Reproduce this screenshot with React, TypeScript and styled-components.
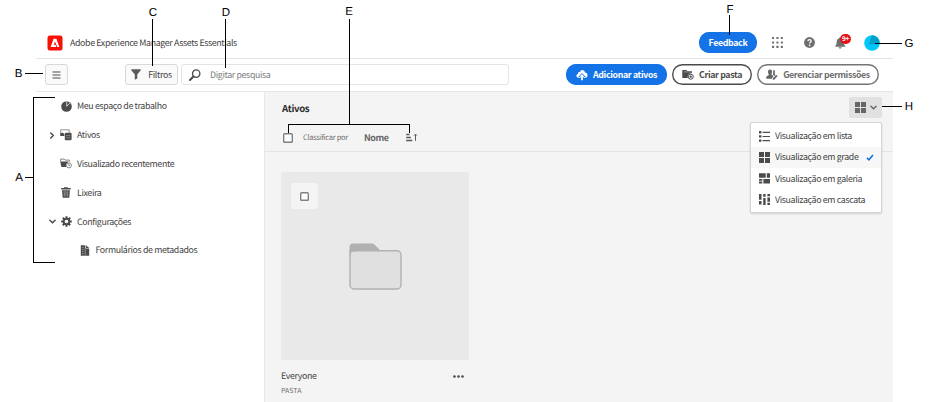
import React from "react";
import styled, { createGlobalStyle } from "styled-components";

const Global = createGlobalStyle`
  *, *::before, *::after { box-sizing: border-box; }
  body {
    margin: 0;
    background: #fff;
    color: #424242;
    font: 8.8px/14px "Noto Sans CJK SC", "Noto Sans", sans-serif;
    letter-spacing: -0.35px;
    text-rendering: geometricPrecision;
    overflow: hidden;
  }
  button { font: inherit; letter-spacing: inherit; color: inherit; padding: 0; background: none; border: 0; }
  svg { display: block; flex: none; }
`;

const Page = styled.div`
  position: relative;
  width: 938px;
  height: 402px;
  padding-left: 36px;
  overflow: hidden;
`;

const Shell = styled.div`
  width: 857px;
  height: 402px;
  display: flex;
  flex-direction: column;
`;

const Header = styled.header`
  height: 59px;
  flex: none;
  display: flex;
  align-items: center;
  padding: 27px 13px 0 11px;
  border-bottom: 1px solid #e4e4e4;
`;

const Title = styled.div`
  margin-left: 7px;
  flex: 1;
  white-space: nowrap;
`;

const HeaderActions = styled.div`
  display: flex;
  align-items: center;
`;

const Pill = styled.button<{ $w: number; $tone: "blue" | "dark" | "gray" }>`
  width: ${(p) => p.$w}px;
  height: 21px;
  display: flex;
  align-items: center;
  justify-content: center;
  gap: 5px;
  border-radius: 11px;
  font-weight: 700;
  white-space: nowrap;
  box-shadow: inset 0 0 0 1.4px
    ${(p) => (p.$tone === "blue" ? "#1473e6" : p.$tone === "dark" ? "#4b4b4b" : "#747474")};
  background: ${(p) => (p.$tone === "blue" ? "#1473e6" : "#fff")};
  color: ${(p) => (p.$tone === "blue" ? "#fff" : p.$tone === "dark" ? "#4b4b4b" : "#6e6e6e")};
`;

const IconSlot = styled.div<{ $ml: number }>`
  position: relative;
  margin-left: ${(p) => p.$ml}px;
`;

const Badge = styled.span`
  position: absolute;
  left: 5px;
  top: -3px;
  width: 11px;
  height: 10px;
  border-radius: 5px;
  background: #e6121a;
  color: #fff;
  font-size: 6.5px;
  line-height: 9px;
  font-weight: 700;
  text-align: center;
`;

const Toolbar = styled.div`
  height: 33px;
  flex: none;
  display: flex;
  align-items: center;
  padding: 0 14px 1px 9px;
  border-bottom: 1px solid #e6e6e6;
`;

const BoxButton = styled.button<{ $w: number }>`
  width: ${(p) => p.$w}px;
  height: 21px;
  display: flex;
  align-items: center;
  justify-content: center;
  gap: 7px;
  background: #fafafa;
  border: 1px solid #d8d8d8;
  border-radius: 3px;
`;

const SearchField = styled.div`
  width: 328px;
  height: 21px;
  margin-left: 3px;
  display: flex;
  align-items: center;
  gap: 9px;
  padding-left: 7px;
  color: #7c7c7c;
  border: 1px solid #e4e4e4;
  border-radius: 3px;
`;

const PillGroup = styled.div`
  margin-left: auto;
  display: flex;
  gap: 5px;
`;

const Body = styled.div`
  flex: 1;
  min-height: 0;
  display: flex;
`;

const Sidebar = styled.nav`
  width: 228px;
`;

const NavRow = styled.div<{ $nested?: boolean }>`
  height: 28.8px;
  display: flex;
  align-items: center;
  padding-left: ${(p) => (p.$nested ? 31.5 : 13)}px;
  white-space: nowrap;
`;

const Toggle = styled.span`
  width: 11px;
  display: flex;
`;

const NavIcon = styled.span`
  width: 12px;
  margin-right: 5px;
  display: flex;
  justify-content: center;
`;

const Content = styled.main`
  flex: 1;
  background: #f4f4f4;
  border-left: 1px solid #e8e8e8;
`;

const ContentTop = styled.div`
  height: 60px;
  border-bottom: 1px solid #e4e4e4;
`;

const TitleRow = styled.div`
  height: 31px;
  display: flex;
  align-items: center;
  justify-content: space-between;
  padding: 0 11px 0 17px;
`;

const Heading = styled.h1`
  margin: 0;
  font-size: 9.6px;
  font-weight: 700;
  color: #2c2c2c;
  letter-spacing: -0.3px;
`;

const ViewSwitch = styled.button`
  width: 33px;
  height: 21px;
  display: flex;
  align-items: center;
  justify-content: center;
  gap: 4px;
  border-radius: 2px;
  background: #e1e1e1;
`;

const SortRow = styled.div`
  height: 29px;
  display: flex;
  align-items: center;
  padding-left: 18px;
`;

const Check = styled.span<{ $size: number }>`
  width: ${(p) => p.$size}px;
  height: ${(p) => p.$size}px;
  box-shadow: inset 0 0 0 1.4px #808080;
  border-radius: 1.5px;
  background: #fff;
`;

const SortLabel = styled.span`
  margin-left: 10px;
  width: 61px;
  font-size: 7.5px;
  letter-spacing: -0.3px;
  color: #707070;
  white-space: nowrap;
`;

const SortValue = styled.span`
  width: 42px;
  font-size: 9px;
  letter-spacing: -0.4px;
  font-weight: 700;
  color: #666;
`;

const Card = styled.article`
  width: 188px;
  margin: 20px 0 0 16px;
`;

const Thumb = styled.div`
  position: relative;
  height: 188px;
  display: flex;
  align-items: center;
  justify-content: center;
  border-radius: 3px;
  background: #e9e9e9;
`;

const SelectChip = styled.div`
  position: absolute;
  left: 10px;
  top: 11px;
  width: 27px;
  height: 26px;
  display: flex;
  align-items: center;
  justify-content: center;
  border-radius: 3px;
  background: #f4f4f4;
`;

const CardTitle = styled.div`
  margin-top: 9px;
  height: 14px;
  display: flex;
  align-items: center;
  justify-content: space-between;
  padding-right: 5px;
`;

const CardType = styled.div`
  margin-top: 0.5px;
  font-size: 7px;
  letter-spacing: 0;
  color: #6e6e6e;
`;

const Menu = styled.div`
  position: absolute;
  left: 750px;
  top: 122px;
  width: 132px;
  height: 91px;
  padding: 2.5px 0;
  border: 1px solid #d6d6d6;
  border-radius: 2px;
  background: #fff;
  box-shadow: 0 1px 2px rgba(0, 0, 0, 0.15);
`;

const MenuRow = styled.div<{ $active?: boolean }>`
  height: 21.25px;
  display: flex;
  align-items: center;
  padding: 0 7px 0 8px;
  gap: 5px;
  white-space: nowrap;
  background: ${(p) => (p.$active ? "#f7f7f7" : "#fff")};
`;

const MenuLabel = styled.span`
  flex: 1;
`;

const Annotations = styled.div`
  position: absolute;
  inset: 0;
  pointer-events: none;
`;

const Leader = styled.svg`
  position: absolute;
  inset: 0;
`;

const Marker = styled.span<{ $x: number; $y: number }>`
  position: absolute;
  left: ${(p) => p.$x - 8}px;
  top: ${(p) => p.$y - 7}px;
  width: 16px;
  text-align: center;
  font: 11.5px/14px "Liberation Sans", sans-serif;
  letter-spacing: 0;
  color: #000;
`;

const ink = "#4b4b4b";

const Logo = () => (
  <svg width="16" height="16" viewBox="0 0 16 16">
    <rect x=".5" y=".5" width="15" height="15" rx="2.5" fill="#fa0f00" />
    <path d="M6.6 3.7h2.8l3 8.2h-2.2L8 6.5l-1.2 3.3h1.7l.8 2.1H3.6z" fill="#fff" />
  </svg>
);

const Apps = () => (
  <svg width="11" height="11" viewBox="0 0 11 11" fill="#6e6e6e">
    {[0, 4.4, 8.8].map((y) => [0, 4.4, 8.8].map((x) => (
      <rect key={`${x}-${y}`} x={x} y={y} width="2.1" height="2.1" rx=".5" />
    )))}
  </svg>
);

const Help = () => (
  <svg width="11" height="11" viewBox="0 0 11 11">
    <circle cx="5.5" cy="5.5" r="5.4" fill="#6e6e6e" />
    <path d="M3.9 4.1c.1-2 3.3-1.9 3.3-.1 0 1.2-1.6 1.2-1.6 2.5" fill="none" stroke="#fff" strokeWidth="1.3" />
    <circle cx="5.6" cy="8.3" r=".85" fill="#fff" />
  </svg>
);

const Bell = () => (
  <svg width="11" height="12" viewBox="0 0 11 12" fill="#6e6e6e">
    <path d="M5 .6c.8 0 1.1.5 1.2 1 2 .5 2.5 2.1 2.5 4.1 0 1.7.7 2.4 1.6 3.1v.9H.3v-.9c.9-.7 1.2-1.4 1.3-3.1 0-2 .5-3.5 2.3-4.1 0-.5.4-1 1.1-1zM3.6 10.3h3c0 1.7-3 1.7-3 0z" />
  </svg>
);

const Avatar = () => (
  <svg width="16" height="16" viewBox="0 0 16 16">
    <circle cx="8" cy="8" r="7.8" fill="#00c8fa" />
    <path d="M7.8.2A7.8 7.8 0 0 1 15.6 9L4.9 9.4z" fill="#009fc7" />
  </svg>
);

const Hamburger = () => (
  <svg width="9" height="8" viewBox="0 0 9 8" stroke={ink} strokeWidth="1.2">
    <path d="M.5 1h8M.5 4h8M.5 7h8" />
  </svg>
);

const Funnel = () => (
  <svg width="10" height="11" viewBox="0 0 10 11" fill="#5c5c5c">
    <path d="M.3.3h9.4v1L6.3 5.6v3.8L3.8 10.8V5.6L.3 1.3z" />
  </svg>
);

const Search = () => (
  <svg width="12" height="12" viewBox="0 0 12 12" fill="none" stroke={ink}>
    <circle cx="7.2" cy="4.6" r="3.7" strokeWidth="1.3" />
    <path d="M4.4 7.5 1 11" strokeWidth="1.9" strokeLinecap="round" />
  </svg>
);

const CloudUp = () => (
  <svg width="12" height="12" viewBox="0 0 12 12">
    <path d="M2.5 8.8C-.3 8.8-.2 5.2 2 4.9 1.7 3.3 3.3 2.7 4 3.1 4.5-.1 9 .4 8.9 3.6c3.3-.1 3.6 5.1.4 5.2z" fill="#fff" />
    <path d="M6 4 9.8 8H7.5v3.4h-3V8H2.2z" fill="#1473e6" />
    <path d="M6 5 8.6 7.7H6.9v3.5H5.1V7.7H3.4z" fill="#fff" />
  </svg>
);

const FolderAdd = () => (
  <svg width="12" height="11" viewBox="0 0 12 11" fill="none">
    <path d="M.3 1h4l1 1h4.5v2.2A3.8 3.8 0 0 0 5.8 9H.3z" fill={ink} />
    <path d="M1.8 2.9h7.5" stroke="#bbb" strokeWidth=".7" />
    <circle cx="8.8" cy="7.7" r="2.5" stroke={ink} strokeWidth="1" fill="#fff" />
    <path d="M8.8 6.3v2.8M7.4 7.7h2.8" stroke={ink} strokeWidth=".9" />
  </svg>
);

const UserEdit = () => (
  <svg width="12" height="12" viewBox="0 0 12 12" fill="#666">
    <path d="M4.1.5c1.5 0 2.1 1 2 2.4-.1 1.2-.6 1.6-.7 2.4 0 .9 1.8.8 2 2L5.9 9.7H.2C.1 7.2.8 7 2.6 6.2 3.3 5.8 2.1 4.8 2 3 1.9 1.5 2.6.5 4.1.5z" />
    <path d="M7 1c1.9-.2 2.4 1.5 1.8 3.1-.7 1.6.5 1.5 1 2.1L8.4 7c-.3-.8-1.5-1-1.5-1.6C7 4.5 7.7 3 7 1zM7.1 9.1 10.5 5.9l1.2 1.2-3.3 3.4-1.7.5z" />
  </svg>
);

const Chevron = ({ down, color = "#444" }: { down?: boolean; color?: string }) => (
  <svg width="7" height="7" viewBox="0 0 7 7" fill="none" stroke={color} strokeWidth="1.4" strokeLinecap="round">
    <path d={down ? "M.9 2.2 3.5 4.8 6.1 2.2" : "M1.7.9 4.3 3.5 1.7 6.1"} />
  </svg>
);

const Workspace = () => (
  <svg width="11" height="11" viewBox="0 0 11 11">
    <circle cx="5.5" cy="5.5" r="5.3" fill={ink} />
    <path d="M5.7 5.3V.3M5.7 5.3 9.2 1.7" stroke="#fff" strokeWidth=".7" fill="none" />
  </svg>
);

const AssetsIcon = () => (
  <svg width="12" height="12" viewBox="0 0 12 12">
    <path d="M.7 6.4V.8h8.5v3" fill="none" stroke="#777" strokeWidth=".8" />
    <path d="M.3 7V4.6L2.4 3.4 4.3 5v2zM4.8 4.6 5.6 3.8h5.2l.8.8v5.8l-.8.8H5.6l-.8-.8z" fill={ink} />
    <path d="M6.1 6.6h4.2M6.1 8.9h4.2" stroke="#aaa" strokeWidth=".6" />
  </svg>
);

const Recent = () => (
  <svg width="12" height="11" viewBox="0 0 12 11">
    <path d="M.7 3.2V1.1h3.5l1 1h4.2v1.5" fill="none" stroke="#666" strokeWidth=".8" />
    <path d="M.2 3.4h8.6L6 6.2V9H1.4z" fill={ink} />
    <circle cx="8.9" cy="7.4" r="2.5" fill="#fff" stroke="#666" strokeWidth=".8" />
    <path d="M8.8 5.9v1.6H10" fill="none" stroke="#666" strokeWidth=".7" />
  </svg>
);

const Trash = () => (
  <svg width="10" height="11" viewBox="0 0 10 11">
    <path d="M3 1V.2h3.8V1h2.9v1.4H.2V1zM1 3.2h7.9L8.3 10.7H1.7z" fill={ink} />
    <path d="M3.2 4.2 3.4 9.4M5 4.2v5.2M6.8 4.2 6.6 9.4" stroke="#bbb" strokeWidth=".6" />
  </svg>
);

const Gear = () => (
  <svg width="11" height="11" viewBox="0 0 11 11">
    <g stroke={ink} strokeWidth="2">
      <path d="M5.5.2v10.6M.2 5.5h10.6M1.8 1.8l7.4 7.4M9.2 1.8 1.8 9.2" />
    </g>
    <circle cx="5.5" cy="5.5" r="3.8" fill={ink} />
    <circle cx="5.5" cy="5.5" r="1.8" fill="#fff" />
  </svg>
);

const Form = () => (
  <svg width="10" height="11" viewBox="0 0 10 11">
    <path d="M.8.2h4.5v3.3h3.9v7.2H.8zM6 .2l3.2 2.7H6z" fill={ink} />
    <path d="M2 2.4h1.7M2 4.5h1.7M2 6.6h1.7M2 8.7h1.7M5.2 3.5v7" stroke="#bbb" strokeWidth=".6" />
  </svg>
);

const SortIcon = () => (
  <svg width="12" height="9" viewBox="0 0 12 9" fill="none" stroke="#5a5a5a">
    <path d="M.2 1.5h3.4M.2 4.5h4.7M.2 7.5h6.1" strokeWidth="1.4" />
    <path d="M9.5 7.8V1.5M8 2.6 9.5 1.1 11 2.6" />
  </svg>
);

const GridIcon = ({ color = ink }: { color?: string }) => (
  <svg width="11" height="11" viewBox="0 0 11 11" fill={color}>
    <path d="M0 0h5v5H0zM6 0h5v5H6zM0 6h5v5H0zM6 6h5v5H6z" />
  </svg>
);

const ListIcon = () => (
  <svg width="11" height="11" viewBox="0 0 11 11" fill={ink}>
    <path d="M0 0h2.4v2.4H0zM0 4.2h2.4v2.4H0zM0 8.4h2.4v2.4H0zM3.6.7H11v1.2H3.6zM3.6 4.9H11v1.2H3.6zM3.6 9.1H11v1.2H3.6z" />
  </svg>
);

const GalleryIcon = () => (
  <svg width="11" height="11" viewBox="0 0 11 11" fill={ink}>
    <path d="M0 .3h6.7v4.4H0zM7.8.3H11v4.4H7.8zM0 6h3.3v1.8H0zM0 8.6h3.3v1.9H0zM4.4 6H11v4.5H4.4z" />
  </svg>
);

const WaterfallIcon = () => (
  <svg width="11" height="11" viewBox="0 0 11 11" fill={ink}>
    <path d="M0 0h2.5v5.8H0zM0 7h2.5v3.5H0zM4.2 0h2.4v2.7H4.2zM4.2 4h2.4v7H4.2zM8.4 0H11v2.2H8.4zM8.4 3.4H11v4.3H8.4zM8.4 8.8H11V11H8.4z" />
  </svg>
);

const Tick = () => (
  <svg width="8" height="7" viewBox="0 0 8 7" fill="none" stroke="#1473e6" strokeWidth="1.6">
    <path d="M1 3.9 2.9 5.8 7 .9" />
  </svg>
);

const Folder = () => (
  <svg width="53" height="47" viewBox="0 0 53 47">
    <path d="M.5 9V4Q.5.5 4 .5h19q1.5 0 2.7 1.2L32 8z" fill="#b1b1b1" />
    <rect x="1" y="7.8" width="51" height="38.2" rx="4" fill="#e0e0e0" stroke="#b1b1b1" strokeWidth="1.4" />
    <path d="M1 12V7.8h6" fill="none" stroke="#b1b1b1" strokeWidth="1.4" />
  </svg>
);

const More = () => (
  <svg width="11" height="3" viewBox="0 0 11 3" fill={ink}>
    <circle cx="1.5" cy="1.5" r="1.3" />
    <circle cx="5.5" cy="1.5" r="1.3" />
    <circle cx="9.5" cy="1.5" r="1.3" />
  </svg>
);

type NavItem = { label: string; icon: React.ReactNode; state?: "open" | "closed"; nested?: boolean };

const nav: NavItem[] = [
  { label: "Meu espaço de trabalho", icon: <Workspace /> },
  { label: "Ativos", icon: <AssetsIcon />, state: "closed" },
  { label: "Visualizado recentemente", icon: <Recent /> },
  { label: "Lixeira", icon: <Trash /> },
  { label: "Configurações", icon: <Gear />, state: "open" },
  { label: "Formulários de metadados", icon: <Form />, nested: true },
];

const views = [
  { label: "Visualização em lista", icon: <ListIcon /> },
  { label: "Visualização em grade", icon: <GridIcon />, active: true },
  { label: "Visualização em galeria", icon: <GalleryIcon /> },
  { label: "Visualização em cascata", icon: <WaterfallIcon /> },
];

const markers: [string, number, number][] = [
  ["A", 19, 178], ["B", 18.5, 74], ["C", 153, 13], ["D", 226, 13],
  ["E", 349, 12], ["F", 730, 10], ["G", 909, 44], ["H", 909, 107],
];

export default function App() {
  return (
    <Page>
      <Global />
      <Shell>
        <Header>
          <Logo />
          <Title>Adobe Experience Manager Assets Essentials</Title>
          <HeaderActions>
            <Pill $w={58} $tone="blue">Feedback</Pill>
            <IconSlot $ml={15}><Apps /></IconSlot>
            <IconSlot $ml={21}><Help /></IconSlot>
            <IconSlot $ml={20}><Bell /><Badge>9+</Badge></IconSlot>
            <IconSlot $ml={18}><Avatar /></IconSlot>
          </HeaderActions>
        </Header>
        <Toolbar>
          <BoxButton $w={23} aria-label="Menu"><Hamburger /></BoxButton>
          <IconSlot $ml={57}><BoxButton $w={53}><Funnel />Filtros</BoxButton></IconSlot>
          <SearchField><Search />Digitar pesquisa</SearchField>
          <PillGroup>
            <Pill $w={101} $tone="blue"><CloudUp />Adicionar ativos</Pill>
            <Pill $w={80} $tone="dark"><FolderAdd />Criar pasta</Pill>
            <Pill $w={122} $tone="gray"><UserEdit />Gerenciar permissões</Pill>
          </PillGroup>
        </Toolbar>
        <Body>
          <Sidebar>
            {nav.map((n) => (
              <NavRow key={n.label} $nested={n.nested}>
                <Toggle>{n.state && <Chevron down={n.state === "open"} />}</Toggle>
                <NavIcon>{n.icon}</NavIcon>
                {n.label}
              </NavRow>
            ))}
          </Sidebar>
          <Content>
            <ContentTop>
              <TitleRow>
                <Heading>Ativos</Heading>
                <ViewSwitch><GridIcon color="#666" /><Chevron down color="#666" /></ViewSwitch>
              </TitleRow>
              <SortRow>
                <Check $size={10} />
                <SortLabel>Classificar por</SortLabel>
                <SortValue>Nome</SortValue>
                <SortIcon />
              </SortRow>
            </ContentTop>
            <Card>
              <Thumb>
                <SelectChip><Check $size={9} /></SelectChip>
                <Folder />
              </Thumb>
              <CardTitle>Everyone<More /></CardTitle>
              <CardType>PASTA</CardType>
            </Card>
          </Content>
        </Body>
      </Shell>
      <Menu>
        {views.map((v) => (
          <MenuRow key={v.label} $active={v.active}>
            {v.icon}
            <MenuLabel>{v.label}</MenuLabel>
            {v.active && <Tick />}
          </MenuRow>
        ))}
      </Menu>
      <Annotations>
        <Leader width="938" height="402" fill="none" stroke="#000" shapeRendering="crispEdges">
          <path d="M55 97.5H33.5V262.5H55M25 177.5H33M25 73.5H43M152.5 19V66M225.5 19V68M349.5 19V124M288.5 133V124.5H409.5V133M729.5 15V35M875 43.5H902M882 106.5H902" />
        </Leader>
        {markers.map(([label, x, y]) => (
          <Marker key={label} $x={x} $y={y}>{label}</Marker>
        ))}
      </Annotations>
    </Page>
  );
}
